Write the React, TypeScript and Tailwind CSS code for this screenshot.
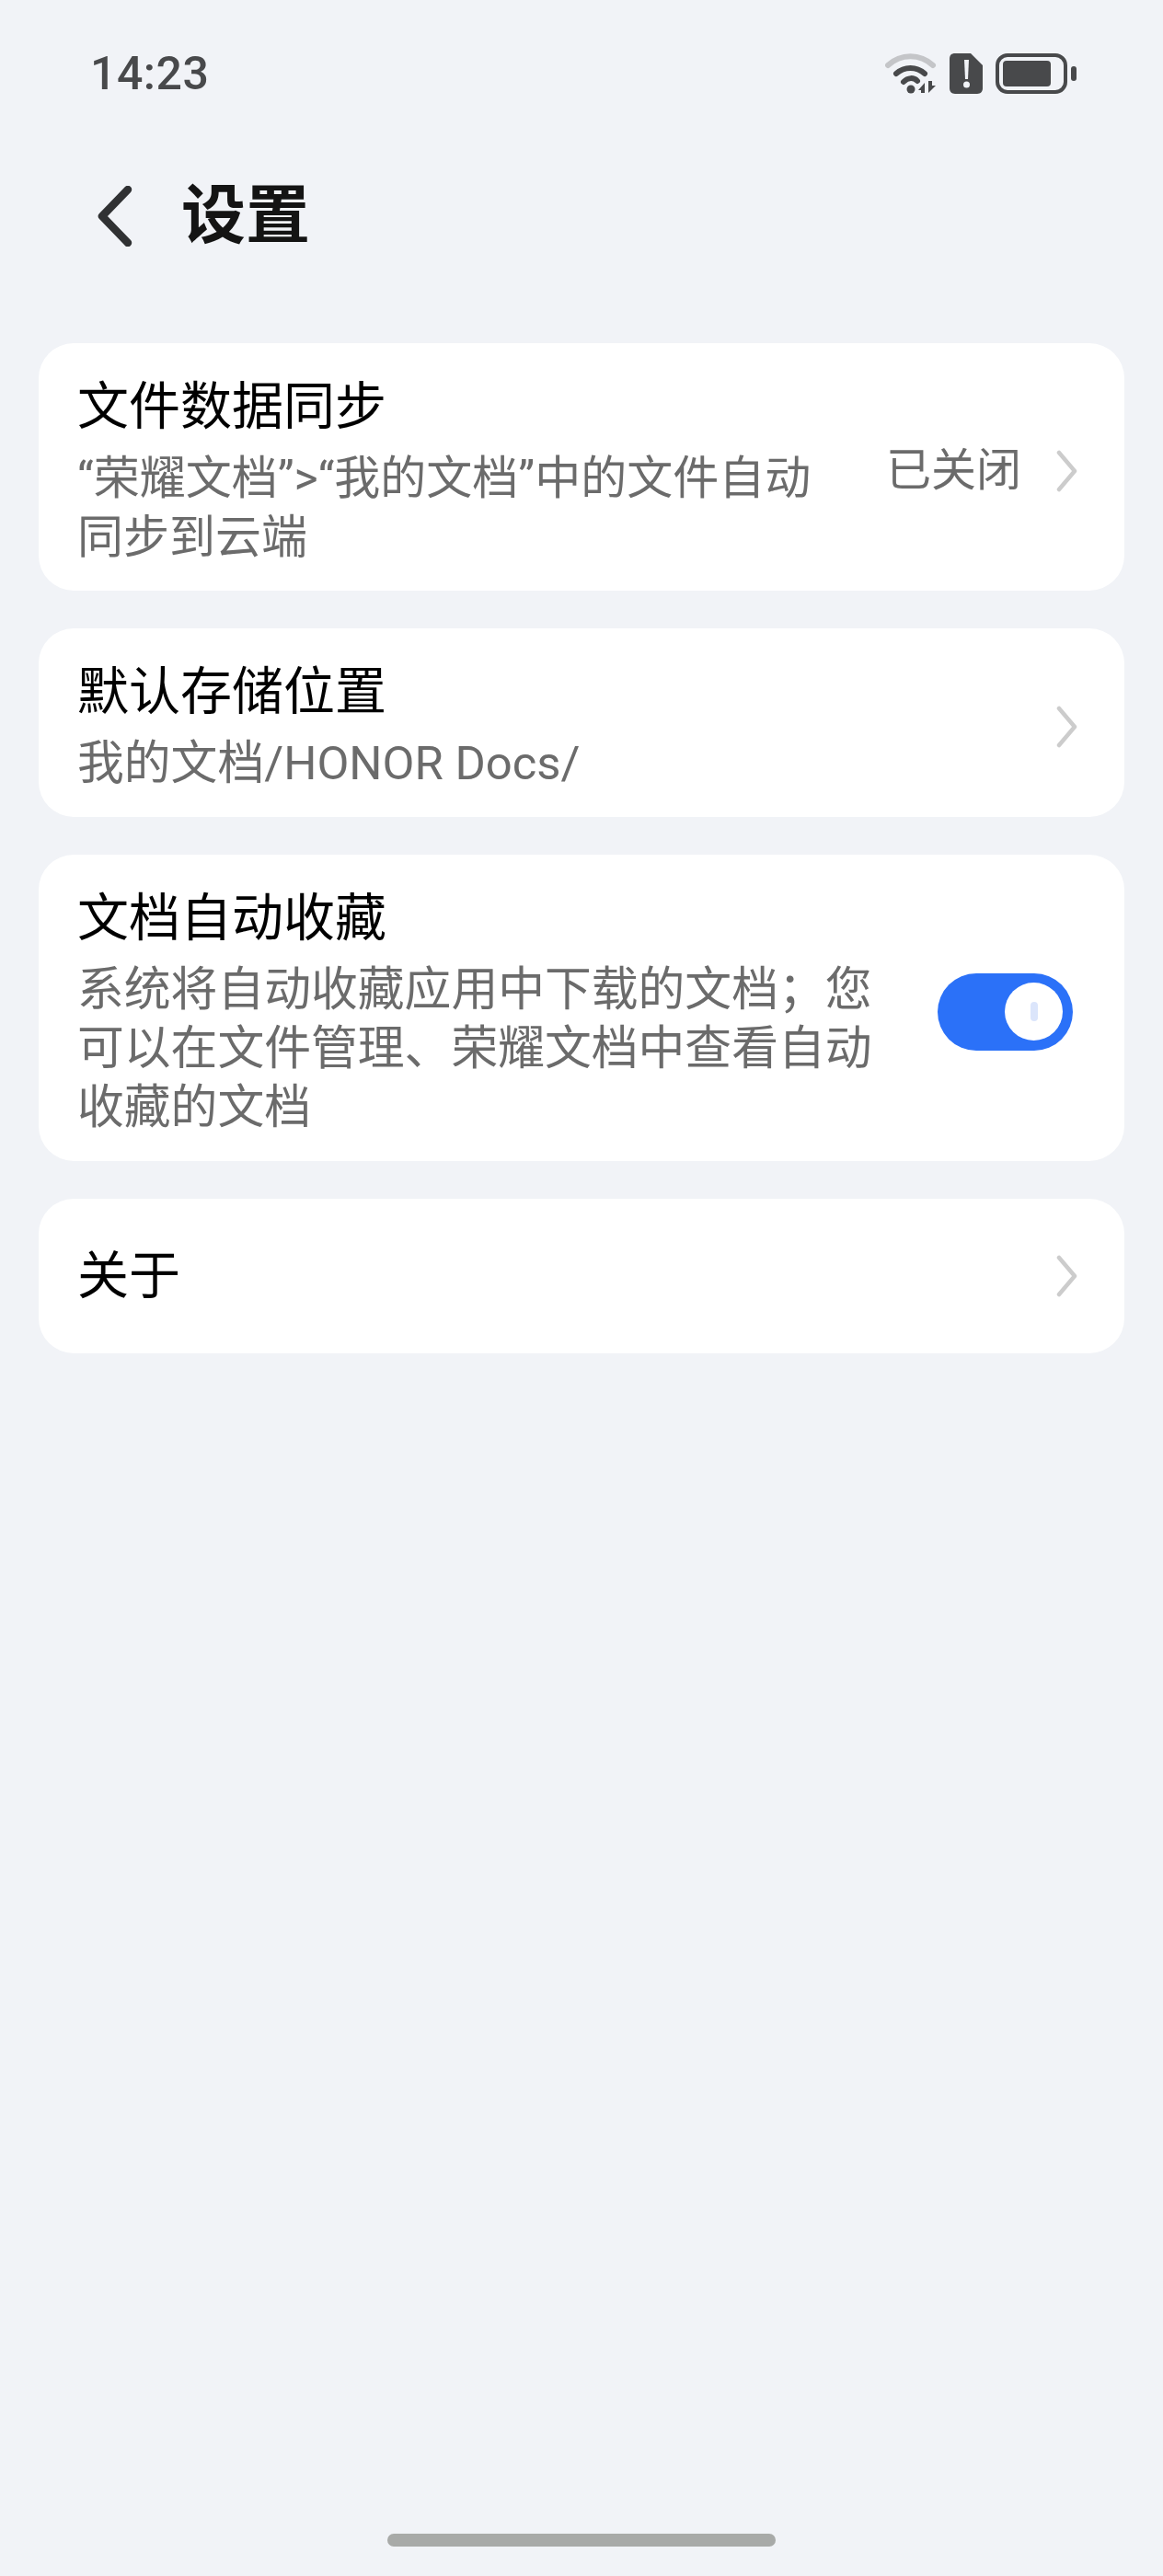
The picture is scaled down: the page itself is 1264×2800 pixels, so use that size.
import type { ReactNode } from "react";

// Roboto first so quotes and latin stay narrow, CJK glyphs fall through to Noto
const fontStack = "font-['Roboto','Noto_Sans_CJK_SC',sans-serif]";

function Chevron() {
  return (
    <svg width="24" height="46" viewBox="0 0 24 46" fill="none" className="shrink-0">
      <path d="M3 3 L20 23 L3 43" stroke="#cccccc" strokeWidth="4.5" strokeLinecap="round" strokeLinejoin="round" />
    </svg>
  );
}

function WifiIcon() {
  return (
    <svg width="56" height="46" viewBox="0 0 56 46" fill="none">
      <path d="M3 14 C17 1 38 1 52 14" stroke="#c4c5c8" strokeWidth="6" strokeLinecap="round" />
      <path d="M12 23 C21 15 34 15 43 23" stroke="#48494b" strokeWidth="6" strokeLinecap="round" />
      <path d="M20 32 C25 27 31 27 35 31" stroke="#48494b" strokeWidth="6" strokeLinecap="round" />
      <circle cx="28" cy="40" r="4.5" fill="#48494b" />
      <path d="M36 41 L43 33 V44 H39 V41 Z" fill="#48494b" />
      <path d="M47 31 V44 L55 36 H51 V31 Z" fill="#48494b" />
    </svg>
  );
}

function SimAlertIcon() {
  return (
    <svg width="36" height="44" viewBox="0 0 36 44">
      <path d="M6 0 H23 L36 13 V38 C36 41 34 44 30 44 H6 C2 44 0 41 0 38 V6 C0 2 2 0 6 0 Z" fill="#48494b" />
      <path d="M16 7 H21 L20 28 H17 Z" fill="#f1f3f7" />
      <circle cx="18.5" cy="34" r="3.5" fill="#f1f3f7" />
    </svg>
  );
}

function BatteryIcon() {
  return (
    <div className="flex items-center gap-1">
      <div className="w-[78px] h-[44px] rounded-[13px] border-[4px] border-[#48494b] p-[4px]">
        <div className="w-[52px] h-full rounded-[4px] bg-[#48494b]" />
      </div>
      <div className="w-[6px] h-[16px] rounded-[3px] bg-[#48494b]" />
    </div>
  );
}

function Card({
  title,
  desc,
  right,
  textWidth,
  descSize = "text-[50.8px]",
}: {
  title: string;
  desc: string;
  right: ReactNode;
  textWidth: string;
  descSize?: string;
}) {
  return (
    <div className="flex items-center justify-between rounded-[38px] bg-white pl-[42px] pr-[50px] pt-[34px] pb-[26px]">
      <div className={textWidth}>
        <div className="text-[56px] leading-[70px] text-black">{title}</div>
        <div className={`${descSize} leading-[64px] text-[#6b6b6b] mt-[11px]`}>{desc}</div>
      </div>
      {right}
    </div>
  );
}

export default function App() {
  return (
    <div className={`${fontStack} flex flex-col min-h-[2800px] bg-[#f1f3f7]`}>
      <div className="flex items-center justify-between pt-[56px] pl-[98px] pr-[94px] h-[104px]">
        <span className="font-medium text-[50px] leading-none tracking-[0.5px] text-[#48494b]">14:23</span>
        <div className="flex items-center gap-[14px]">
          <WifiIcon />
          <SimAlertIcon />
          <BatteryIcon />
        </div>
      </div>

      <div className="flex items-center gap-[52px] pl-[105px] h-[130px] mt-[66px]">
        <svg width="40" height="66" viewBox="0 0 40 66" fill="none" className="shrink-0">
          <path d="M34 4 L6 33 L34 62" stroke="#303133" strokeWidth="8.5" strokeLinecap="round" strokeLinejoin="round" />
        </svg>
        <h1 className="text-[70px] leading-none font-bold text-[#141414]">设置</h1>
      </div>

      <div className="flex flex-col gap-[41px] px-[42px] mt-[73px]">
        <Card
          title="文件数据同步"
          desc="“荣耀文档”>“我的文档”中的文件自动同步到云端"
          descSize="text-[50px]"
          textWidth="w-[812px]"
          right={
            <div className="flex items-center gap-[38px]">
              <span className="text-[49px] leading-none text-[#6b6b6b]">已关闭</span>
              <Chevron />
            </div>
          }
        />
        <Card title="默认存储位置" desc="我的文档/HONOR Docs/" textWidth="w-[812px]" right={<Chevron />} />
        <Card
          title="文档自动收藏"
          desc="系统将自动收藏应用中下载的文档；您可以在文件管理、荣耀文档中查看自动收藏的文档"
          textWidth="w-[868px]"
          right={
            <div className="flex items-center justify-end w-[147px] h-[84px] rounded-full bg-[#2b71f8] pr-[11px] shrink-0 mr-[6px]">
              <div className="flex items-center justify-center w-[63px] h-[63px] rounded-full bg-white">
                <div className="w-[8px] h-[21px] rounded-full bg-[#dbe5fb]" />
              </div>
            </div>
          }
        />
        <div className="flex items-center justify-between h-[168px] rounded-[38px] bg-white pl-[42px] pr-[50px]">
          <span className="text-[56px] leading-none text-black">关于</span>
          <Chevron />
        </div>
      </div>

      <div className="mt-auto mb-[32px] mx-auto w-[422px] h-[14px] rounded-full bg-[#a8aaa8]" />
    </div>
  );
}
